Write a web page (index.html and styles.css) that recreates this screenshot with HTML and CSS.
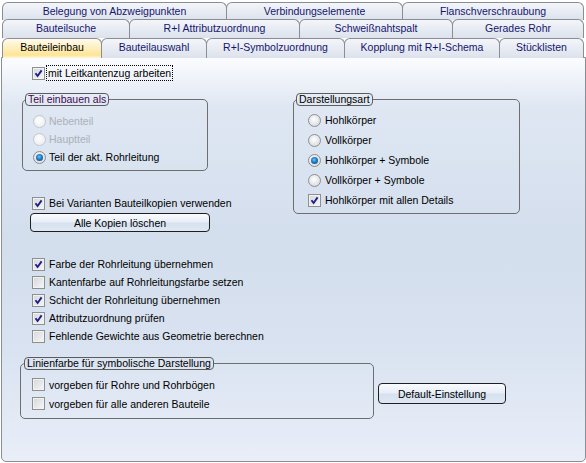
FILE: index.html
```html
<!DOCTYPE html>
<html lang="de">
  <head>
    <meta charset="UTF-8" />
    <title>Bauteileinbau</title>
    <link rel="stylesheet" href="styles.css">
  </head>
  <body>
    <div class="tabs">
      <div class="tab-row row-1">
        <div class="tab">Belegung von Abzweigpunkten</div>
        <div class="tab">Verbindungselemente</div>
        <div class="tab">Flanschverschraubung</div>
      </div>
      <div class="tab-row row-2">
        <div class="tab">Bauteilsuche</div>
        <div class="tab">R+I Attributzuordnung</div>
        <div class="tab">Schweißnahtspalt</div>
        <div class="tab">Gerades Rohr</div>
      </div>
      <div class="tab-row row-3">
        <div class="tab active">Bauteileinbau</div>
        <div class="tab">Bauteilauswahl</div>
        <div class="tab">R+I-Symbolzuordnung</div>
        <div class="tab">Kopplung mit R+I-Schema</div>
        <div class="tab">Stücklisten</div>
      </div>
    </div>

    <div class="panel">
      <div class="panel-top">
        <div class="left-col">
          <div class="check check-first">
            <span class="box"><svg viewBox="0 0 11 11"><path d="M2.5 5.2 L4.6 8 L8.6 2.4" /></svg></span>
            <span class="focus">mit Leitkantenzug arbeiten</span>
          </div>

          <fieldset class="group group-teil">
            <legend class="legend-purple">Teil einbauen als</legend>
            <div class="group-body">
              <div class="radio disabled"><span class="dot"></span>Nebenteil</div>
              <div class="radio disabled"><span class="dot"></span>Hauptteil</div>
              <div class="radio"><span class="dot on"></span>Teil der akt. Rohrleitung</div>
            </div>
          </fieldset>

          <div class="check check-varianten">
            <span class="box"><svg viewBox="0 0 11 11"><path d="M2.5 5.2 L4.6 8 L8.6 2.4" /></svg></span>
            Bei Varianten Bauteilkopien verwenden
          </div>
          <button class="btn btn-kopien">Alle Kopien löschen</button>

          <div class="check-list">
            <div class="check">
              <span class="box"><svg viewBox="0 0 11 11"><path d="M2.5 5.2 L4.6 8 L8.6 2.4" /></svg></span>
              Farbe der Rohrleitung übernehmen
            </div>
            <div class="check"><span class="box"></span>Kantenfarbe auf Rohrleitungsfarbe setzen</div>
            <div class="check">
              <span class="box"><svg viewBox="0 0 11 11"><path d="M2.5 5.2 L4.6 8 L8.6 2.4" /></svg></span>
              Schicht der Rohrleitung übernehmen
            </div>
            <div class="check">
              <span class="box"><svg viewBox="0 0 11 11"><path d="M2.5 5.2 L4.6 8 L8.6 2.4" /></svg></span>
              Attributzuordnung prüfen
            </div>
            <div class="check"><span class="box"></span>Fehlende Gewichte aus Geometrie berechnen</div>
          </div>
        </div>

        <fieldset class="group group-darst">
          <legend>Darstellungsart</legend>
          <div class="group-body">
            <div class="radio"><span class="dot"></span>Hohlkörper</div>
            <div class="radio"><span class="dot"></span>Vollkörper</div>
            <div class="radio"><span class="dot on"></span>Hohlkörper + Symbole</div>
            <div class="radio"><span class="dot"></span>Vollkörper + Symbole</div>
            <div class="check">
              <span class="box"><svg viewBox="0 0 11 11"><path d="M2.5 5.2 L4.6 8 L8.6 2.4" /></svg></span>
              Hohlkörper mit allen Details
            </div>
          </div>
        </fieldset>
      </div>

      <div class="panel-bottom">
        <fieldset class="group group-linie">
          <legend>Linienfarbe für symbolische Darstellung</legend>
          <div class="group-body">
            <div class="check"><span class="box"></span>vorgeben für Rohre und Rohrbögen</div>
            <div class="check"><span class="box"></span>vorgeben für alle anderen Bauteile</div>
          </div>
        </fieldset>
        <button class="btn btn-default">Default-Einstellung</button>
      </div>
    </div>
  </body>
</html>
```

FILE: styles.css
```css
/* General */
* {
  margin: 0;
  padding: 0;
  box-sizing: border-box;
}
body {
  width: 586px;
  height: 463px;
  overflow: hidden;
  padding-left: 1px;
  background-color: white;
  font-family: "Liberation Sans", Arial, sans-serif;
  font-size: 10.5px;
  color: black;
}

/* Tabs */
.tabs {
  padding-left: 1px;
}
.tab-row {
  display: grid;
  height: 19px;
}
.row-1 {
  grid-template-columns: 225px 176px 181px;
  height: 17px;
  margin-top: 2px;
}
.row-2 {
  grid-template-columns: 128px 170px 153px 131px;
}
.row-3 {
  grid-template-columns: 100px 105px 138px 155px 84px;
}
.tab {
  border: 1px solid #8a8d96;
  border-bottom: none;
  border-radius: 6px 6px 0 0;
  background: linear-gradient(#f3f5f9, #dce2ec);
  color: #15156e;
  text-align: center;
  line-height: 17px;
  white-space: nowrap;
}
.tab + .tab {
  margin-left: -1px;
}
.tab.active {
  position: relative;
  z-index: 1;
  height: 20px;
  background: linear-gradient(#fffbee, #fde596 85%, #fff6dc);
  color: black;
}

/* Panel */
.panel {
  width: 585px;
  height: 405px;
  border: 1px solid #8a8d96;
  border-radius: 0 0 5px 5px;
  padding-left: 18px;
  background: linear-gradient(#fbfcfe 0%, #dfe7f3 12%, #d3deed 45%, #d8e2f0 70%, #e9eef8 100%);
}
.panel-top {
  display: flex;
}
.left-col {
  width: 190px;
  padding-top: 7px;
}

/* Checkboxes and radios */
.check,
.radio {
  display: flex;
  align-items: center;
  height: 18px;
  white-space: nowrap;
}
.left-col > .check,
.check-list .check {
  padding-left: 12px;
}
.check-first {
  height: 16px;
}
.box {
  flex: none;
  width: 13px;
  height: 13px;
  margin-right: 4px;
  border: 1px solid #8e8f8f;
  background: linear-gradient(135deg, #d3d6da, #f7f7f7);
  box-shadow: inset 0 0 0 1px #f2f2f2;
}
.box svg {
  display: block;
  width: 11px;
  height: 11px;
}
.box path {
  fill: none;
  stroke: #1e1e84;
  stroke-width: 1.9;
}
.focus {
  margin-left: -3px;
  padding: 0 1px;
  border: 1px dotted black;
  line-height: 14px;
}
.dot {
  flex: none;
  position: relative;
  width: 13px;
  height: 13px;
  margin-right: 3px;
  border: 1px solid #8e8f8f;
  border-radius: 50%;
  background: radial-gradient(circle at 45% 40%, #ffffff, #dcdee2 70%, #c9ccd1);
}
.dot.on::after {
  content: "";
  position: absolute;
  left: 2px;
  top: 2px;
  width: 7px;
  height: 7px;
  border-radius: 50%;
  background: radial-gradient(circle at 45% 40%, #6fc3f5 0, #1f7cc6 45%, #0b3b6c 100%);
}
.radio.disabled {
  color: #abb0b8;
}
.radio.disabled .dot {
  border-color: #c4c7cc;
  background: radial-gradient(circle at 45% 40%, #ffffff, #e6e8eb);
}

/* Group boxes */
.group {
  border: 1px solid #6e6e6e;
  border-radius: 5px;
  min-inline-size: 0;
}
.group legend {
  height: 13px;
  padding: 0 2px;
  border: 1px solid #5c5c5c;
  border-radius: 4px;
  line-height: 11px;
}
.legend-purple {
  color: #3e0a4e;
}
.group-teil {
  width: 186px;
  margin: 12px 0 0 2px;
  padding: 0 0 4px 2px;
}
.group-teil .group-body {
  padding: 6px 0 0 8px;
}
.group-darst {
  width: 227px;
  height: 121px;
  margin: 35px 0 0 83px;
  padding: 0 0 2px 2px;
}
.group-darst .group-body {
  padding: 4px 0 0 12px;
}
.group-darst .radio,
.group-darst .check {
  height: 20px;
}
.group-darst .dot {
  margin-right: 4px;
}
.group-linie {
  width: 354px;
  padding: 0 0 5px 3px;
}
.group-linie .group-body {
  padding: 5px 0 0 8px;
}
.group-linie .check {
  height: 19px;
}

/* Buttons */
.btn {
  display: flex;
  align-items: center;
  justify-content: center;
  border: 1px solid #1f1f1f;
  border-radius: 4px;
  background: linear-gradient(#f9fbfe, #e8eef7 48%, #d6e1ef 52%, #dfe8f4);
  font-family: inherit;
  font-size: 10.5px;
  color: black;
}
.btn-kopien {
  width: 180px;
  height: 19px;
  margin: 1px 0 0 10px;
}
.check-varianten {
  margin-top: 23px;
}
.check-list {
  margin-top: 23px;
}

.panel-bottom {
  display: flex;
  align-items: flex-start;
  margin-top: 12px;
}
.btn-default {
  width: 128px;
  height: 21px;
  margin: 26px 0 0 4px;
}
```
